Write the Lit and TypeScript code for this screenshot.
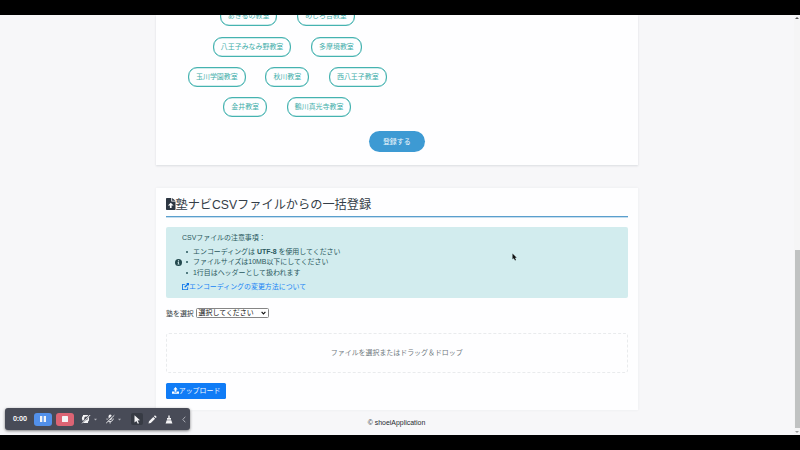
import { LitElement, html, css } from "lit";
import { customElement } from "lit/decorators.js";

const ROOMS: string[][] = [
  ["あきるの教室", "めじろ台教室"],
  ["八王子みなみ野教室", "多摩境教室"],
  ["玉川学園教室", "秋川教室", "西八王子教室"],
  ["金井教室", "鶴川真光寺教室"],
];

@customElement("recorder-bar")
class RecorderBar extends LitElement {
  static styles = css`
    :host {
      display: flex;
      align-items: center;
      box-sizing: border-box;
      width: 185px;
      height: 22px;
      padding-left: 8px;
      border-radius: 3px;
      background: #484b57;
      box-shadow: 0 1px 3px rgba(0, 0, 0, 0.5);
      color: #fff;
      font: 600 7px/22px "Noto Sans", "Liberation Sans", sans-serif;
    }
    .time { width: 21px; }
    .btn {
      width: 18px;
      height: 13px;
      border-radius: 3px;
      display: grid;
      place-items: center;
    }
    .pause { background: #5290ea; }
    .stop { background: #dc6474; margin-left: 4px; }
    svg { display: block; fill: #f4f4f6; }
    .cam { margin-left: 7px; }
    .mic { margin-left: 8px; }
    .dot { margin-left: 3px; }
    .tool {
      width: 12px;
      height: 12px;
      margin-left: 10px;
      display: grid;
      place-items: center;
      border-radius: 2px;
      background: #373b44;
    }
    .pen { margin-left: 5px; }
    .brush { margin-left: 8px; }
    .fold { margin-left: 9px; }
  `;
  render() {
    return html`
      <span class="time">0:00</span>
      <span class="btn pause"><svg width="6" height="6" viewBox="0 0 6 6"><path d="M0 0h2.3v6H0zM3.7 0H6v6H3.7z" /></svg></span>
      <span class="btn stop"><svg width="6" height="6" viewBox="0 0 6 6"><rect width="6" height="6" rx=".6" /></svg></span>
      <svg class="cam" width="10" height="10" viewBox="0 0 10 10">
        <path fill-rule="evenodd" d="M2 1h6v5.6a3 3 0 0 1-1 1.1V9H2V8h1.4A3.8 3.8 0 0 1 2 1.8zM5 2.6a1.8 1.8 0 1 0 0 3.6 1.8 1.8 0 0 0 0-3.6z" />
        <path d="M1 9 9 .6" stroke="#484b57" stroke-width="1.6" /><path d="M1.2 9.3 9.2 1" stroke="#f4f4f6" stroke-width="1" />
      </svg>
      <svg class="dot" width="3" height="3" viewBox="0 0 3 3"><path d="M0 .7h3L1.5 2.4z" opacity=".6" /></svg>
      <svg class="mic" width="10" height="10" viewBox="0 0 10 10">
        <rect x="3.6" y=".6" width="3.2" height="5.4" rx="1.6" />
        <path d="M2 4.5c0 4 6.2 4 6.2 0M5.1 7.5v2" fill="none" stroke="#f4f4f6" stroke-width=".9" />
        <path d="M.7 8.6 8.8.8" stroke="#484b57" stroke-width="1.4" /><path d="M1.2 9.1 9.3 1.3" stroke="#f4f4f6" stroke-width=".9" />
      </svg>
      <svg class="dot" width="3" height="3" viewBox="0 0 3 3"><path d="M0 .7h3L1.5 2.4z" opacity=".6" /></svg>
      <span class="tool"><svg width="8" height="9" viewBox="0 0 8 9"><path d="M1.5.3 7 5.3 4.6 5.5 6 8.2 4.8 8.8 3.4 6 1.5 7.5z" /></svg></span>
      <svg class="pen" width="9" height="9" viewBox="0 0 9 9"><path d="M.5 8.5 1 6.2 5.3 1.9 7.1 3.7 2.8 8zM5.9 1.3 6.6.6c.7-.6 2.4 1 1.8 1.8l-.7.7z" /></svg>
      <svg class="brush" width="8" height="9" viewBox="0 0 8 9"><path d="M3.3.4h1.4v2.5H6v1.8H2V2.9h1.3zM1.7 5.2h4.6L7.4 8.6H.6z" /></svg>
      <svg class="fold" width="4" height="7" viewBox="0 0 4 7"><path d="M3.3.7.8 3.5l2.5 2.8" fill="none" stroke="#b4b6bd" stroke-width=".9" /></svg>
    `;
  }
}

@customElement("app-root")
class AppRoot extends LitElement {
  static styles = css`
    :host {
      display: flex;
      flex-direction: column;
      box-sizing: border-box;
      position: relative;
      width: 800px;
      height: 450px;
      overflow: hidden;
      border-top: 15px solid #000;
      border-bottom: 15px solid #000;
      background: #f7f7f9;
      color: #333b42;
      font: 6.95px/10.4px "Liberation Sans", "Noto Sans CJK JP", sans-serif;
    }
    .card {
      box-sizing: border-box;
      width: 481.5px;
      margin-left: 156px;
      padding: 0 10px;
      background: #fefeff;
      box-shadow: 0 1px 2px rgba(30, 45, 60, 0.13);
      flex: none;
    }
    .rooms-card { height: 150px; padding-top: 0.01px; }
    .csv-card { height: 222px; margin-top: 23px; box-shadow: 0 0 3px rgba(30, 45, 60, 0.06); }
    .rooms {
      width: 242.6px;
      margin-top: -8.9px;
      display: flex;
      flex-direction: column;
      gap: 10.4px;
    }
    .row { display: flex; justify-content: center; gap: 19.6px; }
    .chip {
      box-sizing: border-box;
      height: 20px;
      padding: 0 7.1px;
      border: 1px solid #45b3b0;
      box-shadow: inset 0 0 0 0.2px #45b3b0;
      border-radius: 9px;
      color: #43aeaa;
      line-height: 18px;
      white-space: nowrap;
    }
    .submit {
      width: 55.5px;
      height: 21px;
      margin: 13.9px auto 0;
      border-radius: 10.5px;
      background: #3d9ad3;
      color: #eef7fc;
      line-height: 21.5px;
      text-align: center;
    }
    h2 {
      display: flex;
      align-items: center;
      height: 28.5px;
      margin: 0 0 10px;
      padding-top: 3px;
      box-sizing: border-box;
      border-bottom: 1px solid #5a9fcd;
      box-shadow: 0 0.5px 0 #8dbcdc;
      font-size: 12.2px;
      font-weight: 400;
      line-height: 26px;
      color: #343d47;
      white-space: nowrap;
    }
    h2 span { padding-top: 4px; }
    h2 svg { width: 9.5px; height: 12px; fill: #2c3642; flex: none; margin-top: 2px; }
    .notice {
      display: flex;
      align-items: center;
      box-sizing: border-box;
      height: 71px;
      padding-left: 9px;
      border-radius: 2px;
      background: #d2ecee;
      color: #28575c;
    }
    .info { width: 7px; height: 7px; flex: none; }
    .lines { display: flex; flex-direction: column; padding-top: 1px; }
    ul { margin: 3.7px 0; padding: 0 0 0 11px; list-style: none; }
    li { display: flex; align-items: center; white-space: pre; height: 10.4px; }
    li::before {
      content: "";
      width: 2px;
      height: 2px;
      border-radius: 50%;
      background: #28575c;
      margin: 0 5px 0 -7px;
    }
    .lead { white-space: nowrap; }
    .link { display: flex; align-items: center; color: #1683f5; white-space: nowrap; }
    .link svg { width: 7px; height: 7px; fill: #0c74ea; }
    .pick { display: flex; align-items: center; height: 10px; margin-top: 10.5px; gap: 1.8px; }
    .pick .name { padding-top: 2px; }
    .select {
      display: flex;
      align-items: center;
      justify-content: space-between;
      box-sizing: border-box;
      width: 73px;
      height: 10px;
      padding: 0 2px;
      border: 1px solid #858585;
      border-radius: 1.5px;
      color: #111;
      background: #fff;
      line-height: 8px;
    }
    .select svg { width: 5px; height: 4px; }
    .drop {
      display: flex;
      align-items: center;
      justify-content: center;
      box-sizing: border-box;
      height: 40px;
      padding-top: 1px;
      margin-top: 14.5px;
      border: 1px dashed #e9ebed;
      border-radius: 3px;
      color: #70787e;
    }
    .upload {
      display: flex;
      align-items: center;
      justify-content: center;
      width: 60px;
      height: 16.5px;
      margin-top: 10px;
      border-radius: 1.5px;
      background: #107cf6;
      color: #f2f8ff;
      white-space: nowrap;
    }
    .upload span { padding-top: 1px; }
    .upload svg { width: 7px; height: 7px; fill: #fff; }
    footer { width: 793px; margin-top: 8px; text-align: center; color: #25292d; }
    .scroll {
      position: absolute;
      right: 0;
      top: 0;
      width: 6px;
      height: 420px;
      background: #f5f5f6;
      display: flex;
      flex-direction: column;
      align-items: center;
    }
    .thumb { width: 5px; height: 178px; margin-top: 231px; background: #c0c2c2; }
    .arrow { width: 4px; height: 2px; margin-top: 2px; flex: none; fill: #555; }
    .arrow.down { margin-top: 3px; fill: #999; }
    .cursor { position: absolute; left: 512px; top: 238px; width: 5px; height: 8px; }
    recorder-bar { position: absolute; left: 5px; top: 393px; }
  `;

  render() {
    return html`
      <section class="card rooms-card">
        <div class="rooms">
          ${ROOMS.map((row) => html`<div class="row">${row.map((r) => html`<span class="chip">${r}</span>`)}</div>`)}
        </div>
        <div class="submit">登録する</div>
      </section>
      <section class="card csv-card">
        <h2>
          <svg viewBox="0 0 9 12" preserveAspectRatio="none"><path fill-rule="evenodd" d="M.7 0H5v3.5h4v7.8a.7.7 0 0 1-.7.7H.7a.7.7 0 0 1-.7-.7V.7A.7.7 0 0 1 .7 0zM5.8 0 9 2.8H5.8zM4.5 4.8 1.8 7.5h1.9v2.4h1.6V7.5h1.9z" /></svg><span>塾ナビCSVファイルからの一括登録</span>
        </h2>
        <div class="notice">
          <svg class="info" viewBox="0 0 16 16"><circle cx="8" cy="8" r="8" fill="#23484d" /><path d="M6 7h3v4h1.2v1.8H5.8V11H7V8.8H6zM6.7 3h2.6v2.5H6.7z" fill="#d2ecee" /></svg>
          <div class="lines">
            <span class="lead">CSVファイルの注意事項：</span>
            <ul>
              <li><span>エンコーディングは <b>UTF-8</b> を使用してください</span></li>
              <li><span>ファイルサイズは10MB以下にしてください</span></li>
              <li><span>1行目はヘッダーとして扱われます</span></li>
            </ul>
            <span class="link"><svg viewBox="0 0 16 16"><path d="M9.5 0H16v6.5l-2.2-2.2-6.6 6.6-2.1-2.1 6.6-6.6zM0 3.2C0 2.5.6 2 1.3 2H8L6 4H2v10h10v-4l2-2v6.7c0 .7-.6 1.3-1.3 1.3H1.3C.6 16 0 15.4 0 14.7z" /></svg>エンコーディングの変更方法について</span>
          </div>
        </div>
        <div class="pick">
          <span class="name">塾を選択</span>
          <span class="select">選択してください<svg viewBox="0 0 5 4"><path d="M.6.8 2.5 2.9 4.4.8" fill="none" stroke="#111" stroke-width="1.1" /></svg></span>
        </div>
        <div class="drop">ファイルを選択またはドラッグ＆ドロップ</div>
        <div class="upload"><svg viewBox="0 0 16 16"><path d="M8 0 13 5.5H10V11H6V5.5H3zM0 10h5v2.3h6V10h5v5.5H0z" /></svg><span>アップロード</span></div>
      </section>
      <footer>© shoeiApplication</footer>
      <div class="scroll">
        <svg class="arrow" viewBox="0 0 4 2"><path d="M0 2 2 0l2 2z" /></svg>
        <div class="thumb"></div>
        <svg class="arrow down" viewBox="0 0 4 2"><path d="M0 0h4L2 2z" /></svg>
      </div>
      <svg class="cursor" viewBox="0 0 5 8"><path d="M.5.5v5.7l1.3-1L3 7.5l1-.5-1.1-2.2h1.8z" fill="#111" /></svg>
      <recorder-bar></recorder-bar>
    `;
  }
}
